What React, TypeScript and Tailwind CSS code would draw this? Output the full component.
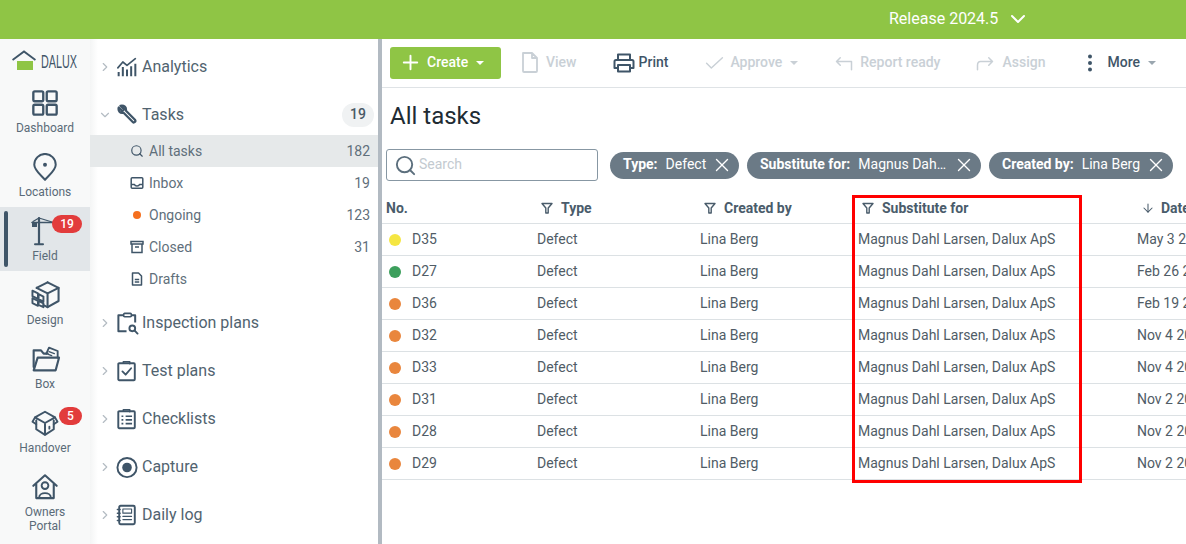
import type { ReactNode } from 'react';
import { ChevronDown, ChevronRight, Plus, X, Search, ArrowDown } from 'lucide-react';

const Svg = ({ size = 24, children, className = '' }: { size?: number; children: ReactNode; className?: string }) => (
  <svg width={size} height={size} viewBox="0 0 24 24" fill="none" stroke="currentColor" strokeWidth={2} strokeLinecap="round" strokeLinejoin="round" className={className}>
    {children}
  </svg>
);

// Rail icons
const DashboardIcon = () => (
  <Svg size={28}>
    <rect x="2" y="2" width="8.5" height="8.5" rx="1.2" />
    <rect x="13.5" y="2" width="8.5" height="8.5" rx="1.2" />
    <rect x="2" y="13.5" width="8.5" height="8.5" rx="1.2" />
    <rect x="13.5" y="13.5" width="8.5" height="8.5" rx="1.2" />
  </Svg>
);
const PinIcon = () => (
  <Svg size={28}>
    <path d="M12 23 C8 18.500 2.800 14.500 2.800 10 a9.200 9.200 0 0 1 18.400 0 C21.200 14.500 16 18.500 12 23 Z" strokeWidth={1.7} />
    <circle cx="12" cy="10" r="1.7" fill="currentColor" stroke="none" />
  </Svg>
);
const CraneIcon = () => (
  <svg width={30} height={30} viewBox="0 0 30 30" fill="none" stroke="currentColor" strokeWidth={1.8} strokeLinecap="round" strokeLinejoin="round">
    <path d="M9 2 V28" strokeWidth={2.2} />
    <path d="M5 28.200 H13" strokeWidth={2} />
    <path d="M2 6.500 H24" strokeWidth={1.6} />
    <path d="M9 2 L3 5.500 M9 2 L22 6" strokeWidth={1.3} />
    <rect x="2" y="6" width="5" height="5" fill="currentColor" stroke="none" />
  </svg>
);
const CubeIcon = () => (
  <Svg size={33}>
    <path d="M13.500 2.500 L21.500 6.500 V16 L13.500 20.500 L10.500 19" strokeWidth={1.5} />
    <path d="M5.500 6.500 L13.500 2.500 M5.500 6.500 L13.500 10.500 L21.500 6.500 M13.500 10.500 V20.500" strokeWidth={1.5} />
    <path d="M2.500 8.500 L6.500 10.500 V14.500 L2.500 12.500 Z M7 11 L10.500 12.800 V16.500 L7 14.700 Z M2.500 14 L6.500 16 V19.500 L2.500 17.500 Z M7 16 L10.500 17.800 V20.500 L7 18.800 Z" strokeWidth={1.4} />
  </Svg>
);
const FolderIcon = () => (
  <Svg size={32}>
    <path d="M3.500 18 V5.500 H9 L11 8 H14" strokeWidth={1.6} />
    <path d="M13 8 L15 3.500 L21.500 6 V11" strokeWidth={1.4} />
    <path d="M15 6.500 L19 8 M14.500 8.500 L17 9.500" strokeWidth={1} />
    <path d="M3.500 20.500 L6.500 11 H22.500 L20 20.500 Z" strokeWidth={1.6} />
  </Svg>
);
const BoxIcon = () => (
  <Svg size={30}>
    <path d="M12 3 L20 7.500 L12 12 L4 7.500 Z M5 10 V17 L12 21.500 L19 17 V10 M12 12 V21.500" strokeWidth={1.6} />
    <path d="M4 7.500 L2 11 L5 13 M20 7.500 L22 11 L19 13 M15.500 15 V16.500" strokeWidth={1.5} />
  </Svg>
);
const HouseUserIcon = () => (
  <Svg size={28}>
    <path d="M2 11 L12 2 L22 11 M4.500 9.500 V21.500 H19.500 V9.500" strokeWidth={1.8} />
    <circle cx="12" cy="10.800" r="2.900" strokeWidth={1.6} />
    <path d="M7 21 C7 16 17 16 17 21" strokeWidth={1.6} />
  </Svg>
);

// Sidebar icons
const AnalyticsIcon = () => (
  <Svg size={20}>
    <path d="M1 13 L7 6 L12 10 L22 2" strokeWidth={2} />
    <path d="M2 18 V23 M7 12 V23 M12 15 V23 M17 11 V23 M22 8 V23" strokeWidth={2.4} strokeLinecap="butt" />
  </Svg>
);
const WrenchIcon = () => (
  <Svg size={21}>
    <path d="M4 2 L8 6 L6 8 L2 4 C1 8 3.500 11 7.500 10 L18 20.500 C19.500 22 22 20 20.500 18 L10 7.500 C11 4 8 1 4 2 Z" strokeWidth={2.6} />
  </Svg>
);
const ClipSearchIcon = () => (
  <Svg size={23}>
    <path d="M8 3.500 H2.500 V20 H11 M16 3.500 H20 V11" strokeWidth={2.1} strokeLinecap="butt" />
    <rect x="8" y="1.500" width="8" height="3.500" rx="1" strokeWidth={1.7} />
    <circle cx="17" cy="17" r="3" strokeWidth={2} />
    <path d="M19.500 19.500 L22.500 22.500" strokeWidth={2} />
  </Svg>
);
const ClipCheckIcon = () => (
  <Svg size={22}>
    <rect x="2.500" y="3.500" width="18" height="18.500" rx="1" strokeWidth={2.1} />
    <path d="M8 3.500 V2 H15 V4" strokeWidth={1.7} />
    <path d="M7 12.500 L10.500 16 L16.500 9" strokeWidth={2} />
  </Svg>
);
const ChecklistIcon = () => (
  <Svg size={22}>
    <rect x="2.500" y="3.500" width="18" height="18.500" rx="1" strokeWidth={2.1} />
    <path d="M8 3.500 V2 H15 V4" strokeWidth={1.7} />
    <path d="M6 9 H8 M6 13 H8 M6 17 H8 M10.500 9 H17.500 M10.500 13 H17.500 M10.500 17 H17.500" strokeWidth={1.9} strokeLinecap="butt" />
  </Svg>
);
const CaptureIcon = () => (
  <Svg size={23}>
    <circle cx="11.500" cy="12" r="10" strokeWidth={2} />
    <circle cx="11.500" cy="12" r="5" fill="currentColor" stroke="none" />
  </Svg>
);
const LogbookIcon = () => (
  <Svg size={22}>
    <rect x="3.500" y="2" width="17" height="20" rx="1.500" strokeWidth={2.1} />
    <path d="M1.500 6 H4.500 M1.500 10 H4.500 M1.500 14 H4.500 M1.500 18 H4.500" strokeWidth={1.6} />
    <rect x="7.500" y="5.500" width="9.500" height="4.500" strokeWidth={1.2} />
    <path d="M7.500 13.500 H17 M7.500 17 H17" strokeWidth={1.2} />
  </Svg>
);
const InboxIcon = () => (
  <svg width={14} height={14} viewBox="0 0 14 14" fill="none" stroke="currentColor" strokeWidth={1.5} strokeLinejoin="round">
    <rect x="1.200" y="1.700" width="11.600" height="10.600" rx="1" />
    <path d="M1.200 8.500 H4.500 C5 10.500 9 10.500 9.500 8.500 H12.800" />
  </svg>
);
const ArchiveIcon = () => (
  <svg width={14} height={14} viewBox="0 0 14 14" fill="none" stroke="currentColor" strokeWidth={1.5}>
    <rect x="1" y="1.500" width="12" height="2.500" />
    <path d="M2 4 V12.500 H12 V4 M5 7 H9" />
  </svg>
);
const DocIcon = () => (
  <svg width={14} height={14} viewBox="0 0 14 14" fill="none" stroke="currentColor" strokeWidth={1.5} strokeLinejoin="round">
    <path d="M2.500 1 H8.500 L11.500 4 V13 H2.500 Z M4.800 7.500 H9.200 M4.800 10 H9.200" />
  </svg>
);

// Toolbar icons
const PrinterIcon = () => (
  <svg width={22} height={20} viewBox="0 0 22 20" fill="none" stroke="currentColor" strokeWidth={2} strokeLinejoin="round">
    <path d="M5 7 V1.500 H17 V7 M5 15 H1.500 V8.500 C1.500 7.500 2 7 3 7 H19 C20 7 20.500 7.500 20.500 8.500 V15 H17 M5 12 H17 V18.500 H5 Z" />
  </svg>
);
const FileIcon = () => (
  <svg width={18} height={21} viewBox="0 0 18 21" fill="none" stroke="currentColor" strokeWidth={1.8} strokeLinejoin="round">
    <path d="M2 1 H11 L16 6 V19 C16 19.600 15.600 20 15 20 H3 C2.400 20 2 19.600 2 19 Z M11 1 V6 H16" />
  </svg>
);
const FunnelIcon = () => (
  <svg width={12} height={12} viewBox="0 0 12 12" fill="none" stroke="currentColor" strokeWidth={1.4} strokeLinejoin="round">
    <path d="M1 1.500 H11 L7.200 6 V11 H4.800 V6 Z" />
  </svg>
);
const Caret = ({ className = '' }: { className?: string }) => (
  <span className={`inline-block w-0 h-0 border-x-[4px] border-x-transparent border-t-[4px] ${className}`} />
);

const railItems: { label: string; icon: ReactNode; badge?: string; active?: boolean }[] = [
  { label: 'Dashboard', icon: <DashboardIcon /> },
  { label: 'Locations', icon: <PinIcon /> },
  { label: 'Field', icon: <CraneIcon />, badge: '19', active: true },
  { label: 'Design', icon: <CubeIcon /> },
  { label: 'Box', icon: <FolderIcon /> },
  { label: 'Handover', icon: <BoxIcon />, badge: '5' },
  { label: 'Owners Portal', icon: <HouseUserIcon /> },
];

const taskLinks: { label: string; count?: string; icon: ReactNode; active?: boolean }[] = [
  { label: 'All tasks', count: '182', icon: <Search size={14} strokeWidth={2} />, active: true },
  { label: 'Inbox', count: '19', icon: <InboxIcon /> },
  { label: 'Ongoing', count: '123', icon: <span className="block w-2 h-2 rounded-full bg-[#f5701f]" /> },
  { label: 'Closed', count: '31', icon: <ArchiveIcon /> },
  { label: 'Drafts', icon: <DocIcon /> },
];

const rows = [
  { no: 'D35', dot: 'bg-[#f5e642]', date: 'May 3 2024' },
  { no: 'D27', dot: 'bg-[#3c9f5c]', date: 'Feb 26 2024' },
  { no: 'D36', dot: 'bg-[#e9863d]', date: 'Feb 19 2024' },
  { no: 'D32', dot: 'bg-[#e9863d]', date: 'Nov 4 2023' },
  { no: 'D33', dot: 'bg-[#e9863d]', date: 'Nov 4 2023' },
  { no: 'D31', dot: 'bg-[#e9863d]', date: 'Nov 2 2023' },
  { no: 'D28', dot: 'bg-[#e9863d]', date: 'Nov 2 2023' },
  { no: 'D29', dot: 'bg-[#e9863d]', date: 'Nov 2 2023' },
];

const GroupRow = ({ label, icon, open, count }: { label: string; icon: ReactNode; open?: boolean; count?: string }) => (
  <div className={`flex items-center pl-[8px] pr-[4px] ${open ? 'h-[44px] pt-[3px]' : 'h-[48px]'}`}>
    {open ? <ChevronDown size={14} className="text-[#b4bcc3]" /> : <ChevronRight size={14} className="text-[#b4bcc3]" />}
    <span className="w-[24px] ml-[3px] flex justify-center text-[#3f5568]">{icon}</span>
    <span className="ml-[3px] text-[16px] text-[#51636f] flex-1">{label}</span>
    {count && (
      <span className="w-[32px] h-[24px] rounded-full bg-[#f0f2f3] text-[14px] font-medium text-[#4a5a66] flex items-center justify-center">{count}</span>
    )}
  </div>
);

const Chip = ({ label, value, className }: { label: string; value: string; className: string }) => (
  <div className={`h-[27px] rounded-full bg-[#6b7a86] text-white text-[14px] flex items-center pl-[13px] pr-[6px] ${className}`}>
    <span className="font-bold whitespace-nowrap pb-[1px]">{label}</span>
    <span className="ml-[8px] whitespace-nowrap flex-1 pb-[1px]">{value}</span>
    <X size={22} strokeWidth={1.5} className="shrink-0" />
  </div>
);

const ToolItem = ({ label, icon, disabled, caret, caretClass = 'border-t-current', className = '' }: { label: string; icon: ReactNode; disabled?: boolean; caret?: boolean; caretClass?: string; className?: string }) => (
  <div className={`flex items-center text-[14px] font-medium pb-[1px] ${disabled ? 'text-[#c9d0d6]' : 'text-[#3f5568]'} ${className}`}>
    {icon}
    <span>{label}</span>
    {caret && <Caret className={`ml-[8px] ${caretClass}`} />}
  </div>
);

const gridCols = 'grid grid-cols-[151px_163px_158px_279px_1fr]';

export default function App() {
  return (
    <div className="w-[1186px] h-[544px] overflow-hidden relative bg-white text-[14px]" style={{ fontFamily: 'Roboto, sans-serif' }}>
      {/* Top bar */}
      <div className="h-[39px] bg-[#8fc545] flex items-center text-white pb-[2px]">
        <span className="ml-[889px] text-[16px]">Release 2024.5</span>
        <ChevronDown size={24} strokeWidth={2} className="ml-[8px]" />
      </div>

      <div className="flex h-[505px]">
        {/* Module rail */}
        <nav className="w-[90px] shrink-0 bg-[#f8f9f9] flex flex-col">
          <div className="h-[40px] flex items-center pl-[12px] pt-[2px] text-[#3f5568]">
            <svg width={24} height={20} viewBox="0 0 24 20" className="shrink-0">
              <path d="M0.500 10 L12 1.500 L23.500 10" fill="none" stroke="currentColor" strokeWidth={2} />
              <rect x="5" y="11" width="16" height="9" fill="#8fc545" />
            </svg>
            <span className="ml-[5px] text-[18px] leading-none origin-left scale-x-[0.6] pt-[3px]" style={{ fontFamily: '"Liberation Sans", sans-serif' }}>DALUX</span>
          </div>
          {railItems.map((item) => (
            <div key={item.label} className={`h-[64px] shrink-0 relative flex flex-col items-center text-[#3f5568] ${item.active ? 'bg-[#e2e6e9]' : ''}`}>
              {item.active && <span className="absolute left-[4px] top-[4px] w-[4px] h-[56px] rounded-full bg-[#3f5568]" />}
              <div className="h-[38px] shrink-0 mt-[5px] flex items-center justify-center">{item.icon}</div>
              <span className="text-[12px] leading-[14px] text-[#5a6b78] text-center w-[70px] mt-[-1px]">{item.label}</span>
              {item.badge && (
                <span className={`absolute top-[8px] h-[18px] rounded-full bg-[#e23c3c] text-white text-[12px] font-medium flex items-center justify-center ${item.badge === '19' ? 'left-[52px] w-[30px]' : 'left-[59px] w-[23px]'}`}>
                  {item.badge}
                </span>
              )}
            </div>
          ))}
        </nav>

        {/* Sidebar */}
        <aside className="w-[288px] shrink-0 bg-white bg-gradient-to-r from-[#f4f5f5] to-white to-[8px] pt-[4px]">
          <GroupRow label="Analytics" icon={<AnalyticsIcon />} />
          <GroupRow label="Tasks" icon={<WrenchIcon />} open count="19" />
          <div className="pb-[4px]">
            {taskLinks.map((link) => (
              <div key={link.label} className={`h-[32px] flex items-center pl-[40px] pr-[8px] ${link.active ? 'bg-[#e6e9ea]' : ''}`}>
                <span className="w-[14px] flex justify-center text-[#3f5568]">{link.icon}</span>
                <span className="ml-[5px] flex-1 text-[#5f6f7b]">{link.label}</span>
                {link.count && <span className="text-[#5f6f7b]">{link.count}</span>}
              </div>
            ))}
          </div>
          <GroupRow label="Inspection plans" icon={<ClipSearchIcon />} />
          <GroupRow label="Test plans" icon={<ClipCheckIcon />} />
          <GroupRow label="Checklists" icon={<ChecklistIcon />} />
          <GroupRow label="Capture" icon={<CaptureIcon />} />
          <GroupRow label="Daily log" icon={<LogbookIcon />} />
        </aside>

        {/* Main */}
        <main className="flex-1 min-w-0 border-l-[4px] border-[#b2bac2]">
          <div className="h-[49px] border-b border-[#dfe3e6] flex items-center pl-[8px]">
            <div className="w-[111px] h-[32px] rounded-[3px] bg-[#8fc545] text-white font-medium flex items-center pl-[9px] pb-[1px]">
              <Plus size={23} strokeWidth={2} />
              <span className="ml-[5px]">Create</span>
              <Caret className="ml-[8px] border-t-white" />
            </div>
            <ToolItem label="View" disabled className="ml-[20px]" icon={<span className="mr-[7px]"><FileIcon /></span>} />
            <ToolItem label="Print" className="ml-[36px]" icon={<span className="mr-[4px]"><PrinterIcon /></span>} />
            <ToolItem label="Approve" disabled caret className="ml-[37px]" icon={<Svg size={19} className="mr-[6px]"><path d="M2 13 L8 19 L22 6" strokeWidth={1.8} /></Svg>} />
            <ToolItem label="Report ready" disabled className="ml-[37px]" icon={<Svg size={18} className="mr-[7px]"><path d="M7 5 L2 10 L7 15 M2 10 H22 V21" strokeWidth={2} /></Svg>} />
            <ToolItem label="Assign" disabled className="ml-[36px]" icon={<Svg size={18} className="mr-[8px]"><path d="M17 5 L22 10 L17 15 M22 10 H6 C3 10 2 13 2 15 V21" strokeWidth={2} /></Svg>} />
            <ToolItem label="More" caret caretClass="border-t-[#9aa6af]" className="ml-[39px]" icon={
              <svg width={12} height={18} viewBox="0 0 12 18" className="mr-[11px]" fill="currentColor"><circle cx="6" cy="2.500" r="2" /><circle cx="6" cy="9" r="2" /><circle cx="6" cy="15.500" r="2" /></svg>
            } />
          </div>

          <h1 className="h-[54px] pl-[8px] pt-[2px] flex items-center text-[24px] text-[#212b33]">All tasks</h1>

          <div className="flex items-center pl-[4px] h-[46px]">
            <div className="w-[212px] h-[32px] rounded-[3px] border border-[#8797a3] flex items-center pl-[7px] text-[#c3cad0]">
              <Search size={23} strokeWidth={2} className="text-[#5c6f7d]" />
              <span className="ml-[2px] pb-[1px]">Search</span>
            </div>
            <Chip label="Type:" value="Defect" className="ml-[12px] w-[129px]" />
            <Chip label="Substitute for:" value="Magnus Dah…" className="ml-[8px] w-[234px]" />
            <Chip label="Created by:" value="Lina Berg" className="ml-[8px] w-[184px]" />
          </div>

          <div className={`${gridCols} h-[36px] items-center border-b border-[#dce1e4] font-bold text-[#4a5c6b]`}>
            <span className="pl-[4px] pt-[5px]">No.</span>
            <span className="pl-[8px] pt-[5px] flex items-center gap-[8px]"><FunnelIcon />Type</span>
            <span className="pl-[8px] pt-[5px] flex items-center gap-[8px]"><FunnelIcon />Created by</span>
            <span className="pl-[8px] pt-[5px] flex items-center gap-[8px]"><FunnelIcon />Substitute for</span>
            <span className="pl-[8px] pt-[5px] flex items-center gap-[6px]"><ArrowDown size={14} strokeWidth={1.8} />Date</span>
          </div>
          {rows.map((row) => (
            <div key={row.no} className={`${gridCols} h-[32px] items-center border-b border-[#dce1e4] text-[#505c66] whitespace-nowrap`}>
              <span className="pl-[7px] flex items-center">
                <span className={`w-3 h-3 rounded-full ${row.dot}`} />
                <span className="ml-[11px]">{row.no}</span>
              </span>
              <span className="pl-[4px]">Defect</span>
              <span className="pl-[4px]">Lina Berg</span>
              <span className="pl-[4px]">Magnus Dahl Larsen, Dalux ApS</span>
              <span className="pl-[4px]">{row.date}</span>
            </div>
          ))}
        </main>
      </div>

      {/* Red highlight drawn over the table */}
      <div className="absolute left-[852px] top-[195px] w-[230px] h-[288px] border-[3px] border-[#ff0000] pointer-events-none" />
    </div>
  );
}
